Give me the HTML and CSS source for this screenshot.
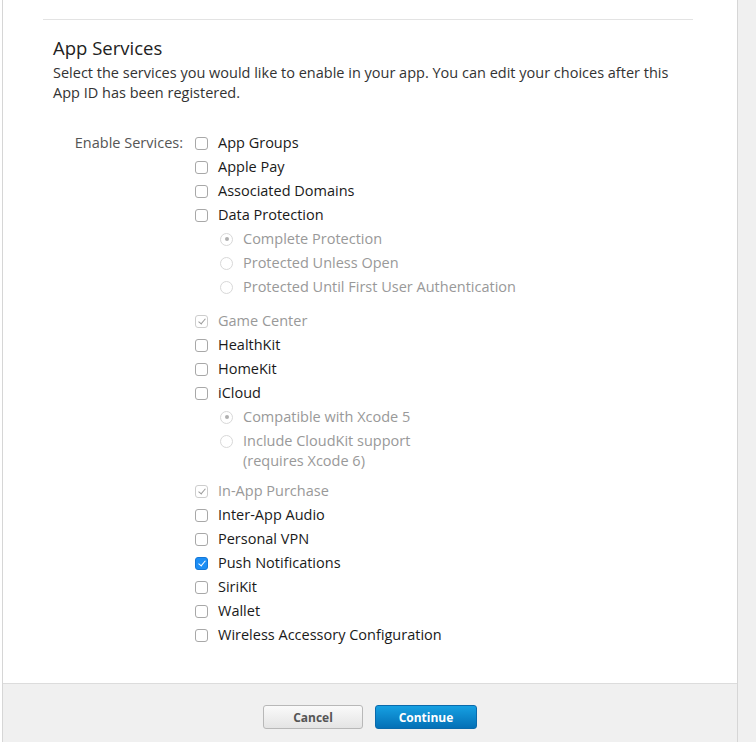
FILE: index.html
```html
<!DOCTYPE html>
<html lang="en">
<head>
    <meta charset="UTF-8">
    <meta name="viewport" content="width=device-width, initial-scale=1.0">
    <title>App Services</title>
    <link rel="stylesheet" href="styles.css">
</head>
<body>
    <div class="page">
        <div class="panel">
            <div class="content">
                <div class="section">
                    <h2>App Services</h2>
                    <p class="desc">Select the services you would like to enable in your app. You can edit your choices after this App ID has been registered.</p>

                    <div class="services">
                        <div class="services-label">Enable Services:</div>
                        <div class="services-list">
                            <div class="row"><span class="box"></span>App Groups</div>
                            <div class="row"><span class="box"></span>Apple Pay</div>
                            <div class="row"><span class="box"></span>Associated Domains</div>
                            <div class="row"><span class="box"></span>Data Protection</div>
                            <div class="sub">
                                <div class="row disabled"><span class="radio selected"></span>Complete Protection</div>
                                <div class="row disabled"><span class="radio"></span>Protected Unless Open</div>
                                <div class="row disabled"><span class="radio"></span>Protected Until First User Authentication</div>
                            </div>
                            <div class="row disabled"><span class="box checked"></span>Game Center</div>
                            <div class="row"><span class="box"></span>HealthKit</div>
                            <div class="row"><span class="box"></span>HomeKit</div>
                            <div class="row"><span class="box"></span>iCloud</div>
                            <div class="sub sub-short">
                                <div class="row disabled"><span class="radio selected"></span>Compatible with Xcode 5</div>
                                <div class="row disabled wrap"><span class="radio"></span><span>Include CloudKit support<br>(requires Xcode 6)</span></div>
                            </div>
                            <div class="row disabled"><span class="box checked"></span>In-App Purchase</div>
                            <div class="row"><span class="box"></span>Inter-App Audio</div>
                            <div class="row"><span class="box"></span>Personal VPN</div>
                            <div class="row"><span class="box checked on"></span>Push Notifications</div>
                            <div class="row"><span class="box"></span>SiriKit</div>
                            <div class="row"><span class="box"></span>Wallet</div>
                            <div class="row"><span class="box"></span>Wireless Accessory Configuration</div>
                        </div>
                    </div>
                </div>
            </div>

            <div class="footer">
                <button class="btn btn-cancel">Cancel</button>
                <button class="btn btn-continue">Continue</button>
            </div>
        </div>
        <div class="side"></div>
    </div>
</body>
</html>
```

FILE: styles.css
```css
* {
    margin: 0;
    padding: 0;
    box-sizing: border-box;
}

body {
    background-color: #fff;
    font-family: 'Open Sans', 'Liberation Sans', sans-serif;
    color: #222;
}

.page {
    display: flex;
    min-height: 742px;
}

.panel {
    margin-left: 2px;
    width: 736px;
    border-left: 1px solid #d6d6d6;
    border-right: 1px solid #d6d6d6;
    display: flex;
    flex-direction: column;
}

.side {
    flex: 1;
    background-color: #f0f0f0;
}

.content {
    flex: 1;
    padding: 19px 44px 0 40px;
}

.section {
    border-top: 1px solid #e3e3e3;
    padding: 16px 10px 36px;
}

h2 {
    font-size: 18.5px;
    font-weight: normal;
    line-height: 24px;
    color: #222;
}

.desc {
    margin-top: 3px;
    font-size: 14.5px;
    line-height: 20px;
    color: #333;
}

.services {
    display: flex;
    margin-top: 28px;
}

.services-label {
    width: 142px;
    padding-right: 12px;
    text-align: right;
    font-size: 14.5px;
    line-height: 24px;
    color: #555;
}

.row {
    display: flex;
    align-items: center;
    font-size: 14.5px;
    line-height: 20px;
    padding: 2px 0;
    color: #1a1a1a;
}

.row.disabled {
    color: #999;
}

.row.wrap {
    align-items: flex-start;
}

.row.wrap .radio {
    margin-top: 4px;
}

.sub {
    padding-left: 25px;
    margin-bottom: 10px;
}

.sub-short {
    margin-bottom: 6px;
}

.box {
    position: relative;
    width: 13px;
    height: 13px;
    border: 1px solid #a8a8a8;
    border-radius: 3px;
    background-color: #fff;
    margin-right: 10px;
    flex-shrink: 0;
}

.disabled .box {
    border-color: #cdcdcd;
}

.box.checked::after {
    content: '';
    position: absolute;
    left: 3.5px;
    top: 1.5px;
    width: 3px;
    height: 6px;
    border-right: 1.5px solid #9a9a9a;
    border-bottom: 1.5px solid #9a9a9a;
    transform: rotate(40deg);
}

.box.on {
    background-color: #1c8ef5;
    border-color: #1577d6;
}

.box.on::after {
    border-color: #fff;
}

.radio {
    position: relative;
    width: 13px;
    height: 13px;
    border: 1px solid #d8d8d8;
    border-radius: 50%;
    background-color: #fff;
    margin-right: 10px;
    flex-shrink: 0;
}

.radio.selected::after {
    content: '';
    position: absolute;
    left: 3.5px;
    top: 3.5px;
    width: 4px;
    height: 4px;
    border-radius: 50%;
    background-color: #b0b0b0;
}

.footer {
    background-color: #f0f0f0;
    border-top: 1px solid #dcdcdc;
    height: 59px;
    display: flex;
    justify-content: center;
    align-items: flex-start;
    gap: 12px;
    padding-top: 21px;
}

.btn {
    height: 24px;
    border-radius: 3px;
    font-family: 'Open Sans', 'Liberation Sans', sans-serif;
    font-size: 12px;
    font-weight: bold;
}

.btn-cancel {
    width: 100px;
    background: linear-gradient(#fafafa, #e4e4e4);
    border: 1px solid #b8b8b8;
    color: #555;
}

.btn-continue {
    width: 102px;
    background: linear-gradient(#16a0e2, #0470b6);
    border: 1px solid #0a6aab;
    color: #fff;
}
```
